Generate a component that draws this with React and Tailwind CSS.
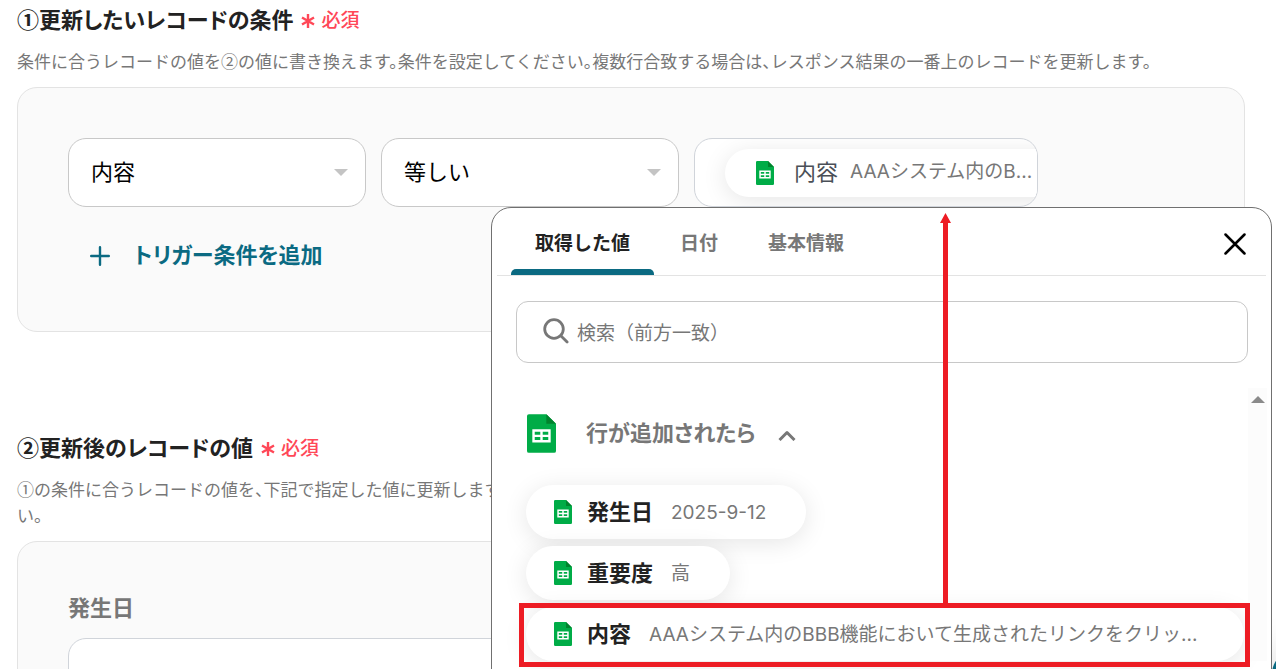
import { useState } from 'react';

const TABS = ['取得した値', '日付', '基本情報'];

const VALUES = [
  { label: '発生日', value: '2025-9-12' },
  { label: '重要度', value: '高' },
  { label: '内容', value: 'AAAシステム内のBBB機能において生成されたリンクをクリッ...', wide: true },
];

function SheetIcon({ className }) {
  return (
    <svg viewBox="0 0 18 24" className={className} aria-hidden="true">
      <path d="M1.2 0H12l6 6v16.8a1.2 1.2 0 0 1-1.200 1.200H1.200A1.200 1.200 0 0 1 0 22.800V1.200A1.200 1.200 0 0 1 1.200 0Z" fill="#00ac47" />
      <path d="M12 0l6 6h-6Z" fill="#00832d" />
      <path
        d="M3.300 9.400h11.400v8.200H3.300ZM4.800 10.900v1.900h3.450v-1.900ZM9.750 10.900v1.900h3.450v-1.900ZM4.800 14.200v1.900h3.450v-1.900ZM9.750 14.200v1.900h3.450v-1.900Z"
        fill="#fff"
        fillRule="evenodd"
      />
    </svg>
  );
}

function Required() {
  return (
    <span className="flex items-center gap-1.5 pt-0.5 text-[19px] font-medium text-[#ff4757]">
      <svg viewBox="0 0 14 14" className="mt-1 size-3.5" fill="none" stroke="currentColor" strokeWidth="2.4" aria-hidden="true">
        <path d="M7 0v14M1 3.500l12 7M13 3.500l-12 7" />
      </svg>
      必須
    </span>
  );
}

function SectionTitle({ children }) {
  return (
    <div className="flex h-6 items-center gap-2 font-['Noto_Sans_CJK_JP',sans-serif] leading-6">
      <h2 className="text-[22px] font-bold text-[#222] [font-feature-settings:'palt']">{children}</h2>
      <Required />
    </div>
  );
}

function Description({ children }) {
  return (
    <p className="mt-[18px] font-['Noto_Sans_CJK_JP',sans-serif] text-[17px] leading-[26px] text-[#777] [font-feature-settings:'halt']">
      {children}
    </p>
  );
}

function ConditionSelect({ label, option }) {
  return (
    <div className="relative w-[298px]">
      <select
        aria-label={label}
        className="h-[69px] w-full appearance-none rounded-[18px] border border-[#c8c8c8] bg-white px-[22px] text-[22px] text-black"
      >
        <option>{option}</option>
      </select>
      <svg viewBox="0 0 14 7" className="pointer-events-none absolute top-[31px] right-[18px] h-[7px] w-3.5" aria-hidden="true">
        <path d="M0 0h14L7 7Z" fill="#c4c4c4" />
      </svg>
    </div>
  );
}

function ValuePicker() {
  const [tab, setTab] = useState(TABS[0]);

  return (
    <div role="dialog" aria-label="値の選択" className="absolute top-[207px] right-1 left-[491px] h-[520px] rounded-[20px] border border-[#707070] bg-white">
      <div className="mx-[5px] flex items-center justify-between border-b border-[#e3e3e3] pr-5 pl-3.5">
        <div role="tablist" className="flex gap-0.5">
          {TABS.map((name) => (
            <button
              key={name}
              type="button"
              role="tab"
              aria-selected={tab === name}
              onClick={() => setTab(name)}
              className={`relative h-[67px] px-6 pt-1.5 text-[19px] font-bold ${tab === name ? 'text-[#222]' : 'text-[#777]'}`}
            >
              {name}
              {tab === name && <span className="absolute inset-x-0 bottom-0 h-1.5 rounded-t-[5px] bg-[#0b6a82]" />}
            </button>
          ))}
        </div>
        <button type="button" aria-label="閉じる" className="mt-1">
          <svg viewBox="0 0 22 22" className="size-[22px]" fill="none" stroke="#000" strokeWidth="2.500" strokeLinecap="round">
            <path d="M1.500 1.500l19 19M20.500 1.500l-19 19" />
          </svg>
        </button>
      </div>

      <label className="mt-[25px] mr-[23px] ml-6 flex h-[62px] items-center gap-2 rounded-xl border border-[#c8c8c8] px-[26px]">
        <svg viewBox="0 0 26 26" className="mb-0.5 size-[26px] shrink-0" fill="none" stroke="#777" strokeWidth="2.800" aria-hidden="true">
          <circle cx="11" cy="11" r="9.300" />
          <path d="M17.800 17.800l6.300 6.300" strokeLinecap="round" />
        </svg>
        <input
          type="text"
          aria-label="検索"
          placeholder="検索（前方一致）"
          className="w-full pt-1 text-[19px] outline-none placeholder:text-[#777]"
        />
      </label>

      <div className="mt-[25px] flex">
        <div className="min-w-0 flex-1 pt-[26px] pr-1 pl-[34px]">
          <button type="button" className="flex items-center pl-px text-[22px] font-bold text-[#777] [font-feature-settings:'palt']">
            <SheetIcon className="h-[39px] w-[29px]" />
            <span className="ml-[30px]">行が追加されたら</span>
            <svg viewBox="0 0 18 11" className="mt-1 ml-[22px] h-[11px] w-[18px]" fill="none" stroke="currentColor" strokeWidth="3" strokeLinejoin="round" aria-hidden="true">
              <path d="M1.500 10l7.500-7.500L16.500 10" />
            </svg>
          </button>
          <ul className="mt-8 flex flex-col items-start gap-[7px]">
            {VALUES.map(({ label, value, wide }) => (
              <li key={label} className={wide ? 'w-full' : ''}>
                <button
                  type="button"
                  className="flex h-[54px] w-full items-center rounded-full bg-white pr-10 pl-7 whitespace-nowrap shadow-[0_4px_24px_rgba(0,0,0,0.1)]"
                >
                  <SheetIcon className="h-6 w-[18px]" />
                  <span className="ml-[15px] text-[22px] font-bold text-[#222]">{label}</span>
                  <span className="ml-[18px] pt-0.5 text-[19px] text-[#777]">{value}</span>
                </button>
              </li>
            ))}
          </ul>
        </div>
        <div className="mr-1 w-[19px] bg-[#fcfcfc] pt-2">
          <svg viewBox="0 0 14 7" className="mx-auto h-[7px] w-3.5" aria-hidden="true">
            <path d="M0 7h14L7 0Z" fill="#8a8a8a" />
          </svg>
        </div>
      </div>
    </div>
  );
}

function Highlight() {
  return (
    <div className="pointer-events-none">
      <svg viewBox="0 0 12 392" className="absolute top-[213px] left-[940px] h-[392px] w-3" fill="#ed1c24" aria-hidden="true">
        <path d="M5.500 0L11 10H8v382H3V10H0Z" />
      </svg>
      <div className="absolute top-[603px] right-[26px] left-[519px] h-16 border-5 border-[#ed1c24]" />
    </div>
  );
}

export default function App() {
  return (
    <main
      lang="ja"
      className="relative h-screen overflow-hidden bg-white pt-1.5 pr-[31px] pl-[17px] font-[Inter,'Noto_Sans_CJK_JP',sans-serif]"
    >
      <section>
        <SectionTitle>①更新したいレコードの条件</SectionTitle>
        <Description>
          条件に合うレコードの値を②の値に書き換えます。条件を設定してください。複数行合致する場合は、レスポンス結果の一番上のレコードを更新します。
        </Description>
        <div className="mt-[13px] rounded-[20px] border border-[#e3e3e3] bg-[#fafafa] px-[50px] pt-[50px] pb-[60px]">
          <div className="flex gap-[15px]">
            <ConditionSelect label="項目" option="内容" />
            <ConditionSelect label="条件" option="等しい" />
            <div className="flex h-[69px] w-[344px] items-center overflow-hidden rounded-[18px] border border-[#d0d4da] bg-white pl-[30px]">
              <div className="flex h-12 w-[380px] shrink-0 items-center rounded-full bg-white pl-[31px] whitespace-nowrap shadow-[0_4px_24px_rgba(0,0,0,0.1)]">
                <SheetIcon className="h-6 w-[18px]" />
                <span className="ml-5 text-[22px] text-[#4a4f57]">内容</span>
                <span className="ml-3 text-[19px] text-[#777]">AAAシステム内のB...</span>
              </div>
            </div>
          </div>
          <button type="button" className="mt-8 ml-[22px] flex h-8 items-center gap-6 text-[22px] font-bold text-[#0b6a82] [font-feature-settings:'palt']">
            <svg viewBox="0 0 20 20" className="mt-0.5 size-5" fill="none" stroke="currentColor" strokeWidth="2.400" strokeLinecap="round" aria-hidden="true">
              <path d="M10 1.200v17.600M1.200 10h17.600" />
            </svg>
            トリガー条件を追加
          </button>
        </div>
      </section>

      <section className="mt-[102px]">
        <SectionTitle>②更新後のレコードの値</SectionTitle>
        <Description>
          ①の条件に合うレコードの値を、下記で指定した値に更新します
          <br />
          い。
        </Description>
        <div className="mt-[13px] rounded-[20px] border border-[#e3e3e3] bg-[#fafafa] px-[50px] pt-[50px] pb-[60px]">
          <label htmlFor="date" className="block text-[22px] leading-8 font-bold text-[#777]">
            発生日
          </label>
          <input id="date" type="text" className="mt-3.5 h-[69px] w-full rounded-[18px] border border-[#d0d4da] bg-white px-[22px] text-[22px]" />
        </div>
      </section>

      <button type="button" aria-label="ヘルプ" className="absolute top-[650px] -right-11 size-12 rounded-full bg-[#0b6a82] shadow-[0_0_40px_rgba(0,0,0,0.2)]" />
      <ValuePicker />
      <Highlight />
    </main>
  );
}
